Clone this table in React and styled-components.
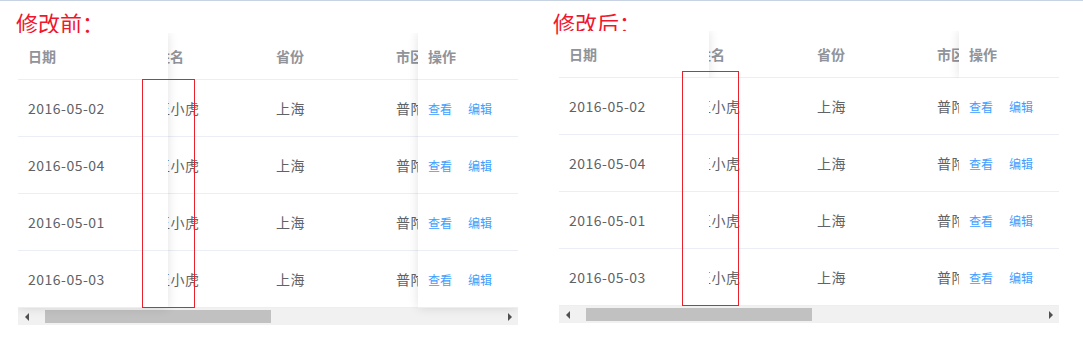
import React from 'react';
import styled, { createGlobalStyle } from 'styled-components';

const GlobalStyle = createGlobalStyle`
  html, body {
    margin: 0;
    padding: 0;
    background: #fff;
  }
  body {
    font-family: "Noto Sans CJK SC", "Noto Sans", sans-serif;
  }
`;

const columns = [
  { key: 'date', label: '日期', width: 150 },
  { key: 'name', label: '姓名', width: 120 },
  { key: 'province', label: '省份', width: 120 },
  { key: 'city', label: '市区', width: 120 },
  { key: 'address', label: '地址', width: 300 },
  { key: 'zip', label: '邮编', width: 120 },
  { key: 'op', label: '操作', width: 100 },
];

const rows = [
  { date: '2016-05-02', name: '王小虎', province: '上海', city: '普陀区', address: '上海市普陀区金沙江路 1518 弄', zip: '200333' },
  { date: '2016-05-04', name: '王小虎', province: '上海', city: '普陀区', address: '上海市普陀区金沙江路 1517 弄', zip: '200333' },
  { date: '2016-05-01', name: '王小虎', province: '上海', city: '普陀区', address: '上海市普陀区金沙江路 1519 弄', zip: '200333' },
  { date: '2016-05-03', name: '王小虎', province: '上海', city: '普陀区', address: '上海市普陀区金沙江路 1516 弄', zip: '200333' },
];

const TABLE_WIDTH = 500;
const SCROLL_LEFT = 22;
const TOTAL_WIDTH = columns.reduce((sum, c) => sum + c.width, 0);
const gridCols = (cols) => cols.map((c) => `${c.width}px`).join(' ');

const Page = styled.div`
  border-top: 1px solid #c7d2e3;
  display: grid;
  grid-template-columns: 537px 1fr;
  padding-left: 16px;
`;

const Panel = styled.div`
  display: flex;
  flex-direction: column;
`;

const Title = styled.div`
  padding-top: 10px;
  height: 22px;
  line-height: 22px;
  font-size: 22px;
  color: #f0162c;
  margin-bottom: ${(p) => p.$pull}px;
  white-space: nowrap;
`;

const Table = styled.div`
  position: relative;
  width: ${TABLE_WIDTH}px;
  margin-left: ${(p) => p.$indent}px;
  overflow: hidden;
  background: #fff;
`;

const Viewport = styled.div`
  overflow: hidden;
`;

const Inner = styled.div`
  width: ${TOTAL_WIDTH}px;
  transform: translateX(-${SCROLL_LEFT}px);
`;

const Row = styled.div`
  display: grid;
  grid-template-columns: ${(p) => p.$cols};
  height: ${(p) => (p.$head ? 47 : 57)}px;
  box-sizing: border-box;
  border-bottom: 1px solid #ebeef5;
`;

const Cell = styled.div`
  display: flex;
  align-items: center;
  padding-left: 10px;
  white-space: nowrap;
  overflow: hidden;
  font-size: 14px;
  letter-spacing: ${(p) => (p.$head ? 0 : 0.5)}px;
  color: ${(p) => (p.$head ? '#909399' : '#606266')};
  font-weight: ${(p) => (p.$head ? 700 : 400)};
`;

const Fixed = styled.div`
  position: absolute;
  top: 0;
  ${(p) => (p.$side === 'left' ? 'left: 0;' : 'right: 0;')}
  width: ${(p) => p.$width}px;
  background: #fff;
  z-index: 2;
  box-shadow: ${(p) => (p.$shadow ? '0 0 10px rgba(0, 0, 0, 0.12)' : 'none')};
`;

const FixedHead = styled(Row)`
  position: relative;
  background: #fff;
  box-shadow: ${(p) => (p.$shadow ? '0 0 10px rgba(0, 0, 0, 0.12)' : 'none')};
  clip-path: inset(0 -14px 0 -14px);
`;

const FixedBody = styled.div`
  position: relative;
  background: #fff;
`;

const LinkGroup = styled.div`
  display: flex;
  align-items: center;
  gap: 16px;
  padding-left: 10px;
`;

const TextLink = styled.span`
  font-size: 12px;
  color: #409eff;
  cursor: pointer;
  white-space: nowrap;
`;

const ScrollTrack = styled.div`
  display: flex;
  height: 17px;
  background: #f1f1f1;
`;

const ArrowButton = styled.div`
  width: 17px;
  display: flex;
  align-items: center;
  justify-content: center;

  &::before {
    content: '';
    width: 0;
    height: 0;
    border-top: 4px solid transparent;
    border-bottom: 4px solid transparent;
    ${(p) =>
      p.$dir === 'left'
        ? 'border-right: 4px solid #505050;'
        : 'border-left: 4px solid #505050;'}
  }
`;

const ThumbLane = styled.div`
  flex: 1;
  display: flex;
  align-items: flex-start;
  padding-top: 2px;
`;

const Thumb = styled.div`
  height: 13px;
  background: #c1c1c1;
`;

const Mark = styled.div`
  position: absolute;
  left: ${(p) => p.$x}px;
  top: ${(p) => p.$y}px;
  width: ${(p) => p.$w}px;
  height: ${(p) => p.$h}px;
  box-sizing: border-box;
  border: 1px solid #e8212c;
  z-index: 5;
  pointer-events: none;
`;

const Scrollbar = () => {
  const lane = TABLE_WIDTH - 34;
  const thumbWidth = Math.round((lane * TABLE_WIDTH) / TOTAL_WIDTH);
  const thumbOffset = Math.round((lane * SCROLL_LEFT) / TOTAL_WIDTH);
  return (
    <ScrollTrack>
      <ArrowButton $dir="left" />
      <ThumbLane>
        <Thumb style={{ width: thumbWidth, marginLeft: thumbOffset }} />
      </ThumbLane>
      <ArrowButton $dir="right" />
    </ScrollTrack>
  );
};

const Actions = () => (
  <LinkGroup>
    <TextLink>查看</TextLink>
    <TextLink>编辑</TextLink>
  </LinkGroup>
);

const renderCell = (col, row) =>
  col.key === 'op' ? <Actions key={col.key} /> : <Cell key={col.key}>{row[col.key]}</Cell>;

const FixedColumn = ({ side, col, bodyShadow }) => (
  <Fixed $side={side} $width={col.width} $shadow={bodyShadow}>
    <FixedHead $head $cols={`${col.width}px`} $shadow={!bodyShadow}>
      <Cell $head>{col.label}</Cell>
    </FixedHead>
    <FixedBody>
      {rows.map((row, i) => (
        <Row key={i} $cols={`${col.width}px`}>
          {renderCell(col, row)}
        </Row>
      ))}
    </FixedBody>
  </Fixed>
);

const DataTable = ({ indent, fixedShadow, mark }) => {
  const cols = gridCols(columns);
  return (
    <Table $indent={indent}>
      <Viewport>
        <Inner>
          <Row $head $cols={cols}>
            {columns.map((c) => (
              <Cell $head key={c.key}>
                {c.label}
              </Cell>
            ))}
          </Row>
          {rows.map((row, i) => (
            <Row key={i} $cols={cols}>
              {columns.map((c) => renderCell(c, row))}
            </Row>
          ))}
        </Inner>
      </Viewport>
      <FixedColumn side="left" col={columns[0]} bodyShadow={fixedShadow} />
      <FixedColumn side="right" col={columns[columns.length - 1]} bodyShadow={fixedShadow} />
      <Scrollbar />
      <Mark $x={mark.x} $y={mark.y} $w={mark.w} $h={mark.h} />
    </Table>
  );
};

export default function App() {
  return (
    <>
      <GlobalStyle />
      <Page>
        <Panel>
          <Title $pull={0}>修改前：</Title>
          <DataTable indent={2} fixedShadow mark={{ x: 124, y: 46, w: 53, h: 229 }} />
        </Panel>
        <Panel>
          <Title $pull={-2}>修改后：</Title>
          <DataTable indent={6} fixedShadow={false} mark={{ x: 123, y: 40, w: 57, h: 235 }} />
        </Panel>
      </Page>
    </>
  );
}
